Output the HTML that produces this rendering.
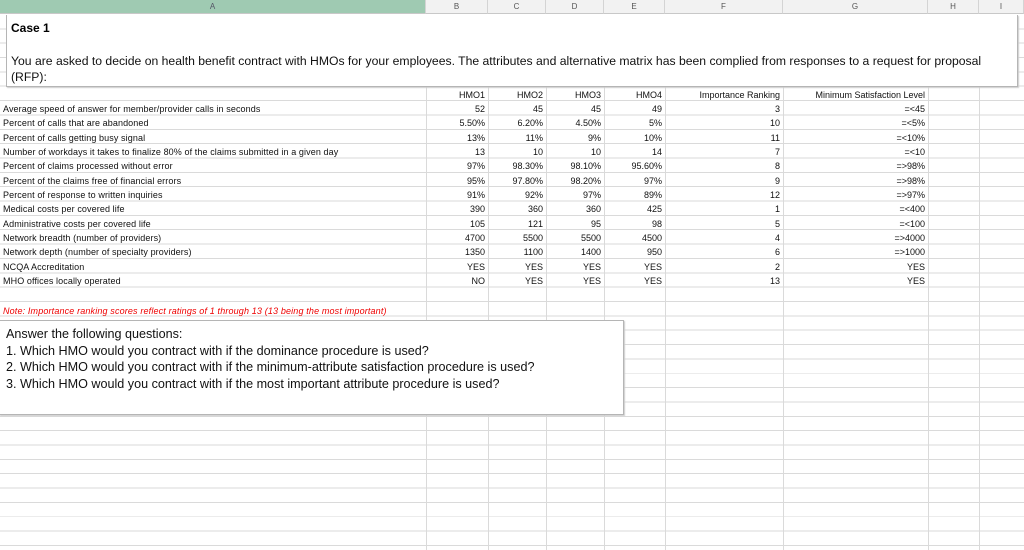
<!DOCTYPE html>
<html><head><meta charset="utf-8"><style>
body{margin:0;width:1024px;height:550px;overflow:hidden;background:#fff;position:relative;font-family:"Liberation Sans",sans-serif;}
.h{position:absolute;top:0;height:14px;background:#f2f2f2;border-right:1px solid #d4d4d4;border-bottom:1px solid #c8c8c8;font-size:8px;color:#555;text-align:center;line-height:14px;box-sizing:border-box}
.grid{position:absolute;left:0;top:15px;width:1024px;height:535px;background-image:repeating-linear-gradient(to bottom,transparent 0,transparent 13.35px,#dadada 13.35px,#dadada 14.35px);}
.v{position:absolute;top:15px;height:535px;width:1px;background:#dadada}
.c{position:absolute;font-size:9px;letter-spacing:0;color:#111;white-space:nowrap;line-height:14px}
.r{text-align:right}
.box{position:absolute;background:#fff;border:1px solid #b5b5b5;box-shadow:1px 1px 1px #ccc}
</style></head><body>
<div class="grid"></div>
<div class="v" style="left:426px"></div><div class="v" style="left:488px"></div><div class="v" style="left:546px"></div><div class="v" style="left:604px"></div><div class="v" style="left:665px"></div><div class="v" style="left:783px"></div><div class="v" style="left:928px"></div><div class="v" style="left:979px"></div>
<div class="h" style="left:0;width:426px;background:#9fcab2;color:#556">A</div>
<div class="h" style="left:426px;width:62px">B</div>
<div class="h" style="left:488px;width:58px">C</div>
<div class="h" style="left:546px;width:58px">D</div>
<div class="h" style="left:604px;width:61px">E</div>
<div class="h" style="left:665px;width:118px">F</div>
<div class="h" style="left:783px;width:145px">G</div>
<div class="h" style="left:928px;width:51px">H</div>
<div class="h" style="left:979px;width:45px">I</div>

<div class="box" style="left:6px;top:15px;width:1010px;height:71px;border-top:none">
<div style="position:absolute;left:4px;top:6px;font-size:12px;font-weight:bold">Case 1</div>
<div style="position:absolute;left:4px;top:38px;font-size:12.2px;letter-spacing:0;line-height:16px;width:992px;color:#111">You are asked to decide on health benefit contract with HMOs for your employees. The attributes and alternative matrix has been complied from responses to a request for proposal (RFP):</div>
</div>

<div class="c r" style="left:426px;width:59px;top:88px">HMO1</div>
<div class="c r" style="left:488px;width:55px;top:88px">HMO2</div>
<div class="c r" style="left:546px;width:55px;top:88px">HMO3</div>
<div class="c r" style="left:604px;width:58px;top:88px">HMO4</div>
<div class="c r" style="left:665px;width:115px;top:88px">Importance Ranking</div>
<div class="c r" style="left:783px;width:142px;top:88px">Minimum Satisfaction Level</div>

<div class="c" style="left:3px;top:102px;line-height:14.35px;letter-spacing:0.1px">Average speed of answer for member/provider calls in seconds<br>Percent of calls that are abandoned<br>Percent of calls getting busy signal<br>Number of workdays it takes to finalize 80% of the claims submitted in a given day<br>Percent of claims processed without error<br>Percent of the claims free of financial errors<br>Percent of response to written inquiries<br>Medical costs per covered life<br>Administrative costs per covered life<br>Network breadth (number of providers)<br>Network depth (number of specialty providers)<br>NCQA Accreditation<br>MHO offices locally operated</div>

<div class="c r" style="left:426px;width:59px;top:102px;line-height:14.35px">52<br>5.50%<br>13%<br>13<br>97%<br>95%<br>91%<br>390<br>105<br>4700<br>1350<br>YES<br>NO</div>
<div class="c r" style="left:488px;width:55px;top:102px;line-height:14.35px">45<br>6.20%<br>11%<br>10<br>98.30%<br>97.80%<br>92%<br>360<br>121<br>5500<br>1100<br>YES<br>YES</div>
<div class="c r" style="left:546px;width:55px;top:102px;line-height:14.35px">45<br>4.50%<br>9%<br>10<br>98.10%<br>98.20%<br>97%<br>360<br>95<br>5500<br>1400<br>YES<br>YES</div>
<div class="c r" style="left:604px;width:58px;top:102px;line-height:14.35px">49<br>5%<br>10%<br>14<br>95.60%<br>97%<br>89%<br>425<br>98<br>4500<br>950<br>YES<br>YES</div>
<div class="c r" style="left:665px;width:115px;top:102px;line-height:14.35px">3<br>10<br>11<br>7<br>8<br>9<br>12<br>1<br>5<br>4<br>6<br>2<br>13</div>
<div class="c r" style="left:783px;width:142px;top:102px;line-height:14.35px">=&lt;45<br>=&lt;5%<br>=&lt;10%<br>=&lt;10<br>=&gt;98%<br>=&gt;98%<br>=&gt;97%<br>=&lt;400<br>=&lt;100<br>=&gt;4000<br>=&gt;1000<br>YES<br>YES</div>

<div class="c" style="left:3px;top:304px;color:#e00;font-style:italic;font-size:9px;letter-spacing:0.15px">Note: Importance ranking scores reflect ratings of 1 through 13 (13 being the most important)</div>

<div class="box" style="left:-1px;top:320px;width:623px;height:93px">
<div style="position:absolute;left:6px;top:5px;font-size:12.6px;line-height:16.5px;color:#111">Answer the following questions:<br>1. Which HMO would you contract with if the dominance procedure is used?<br>2. Which HMO would you contract with if the minimum-attribute satisfaction procedure is used?<br>3. Which HMO would you contract with if the most important attribute procedure is used?</div>
</div>
</body></html>
